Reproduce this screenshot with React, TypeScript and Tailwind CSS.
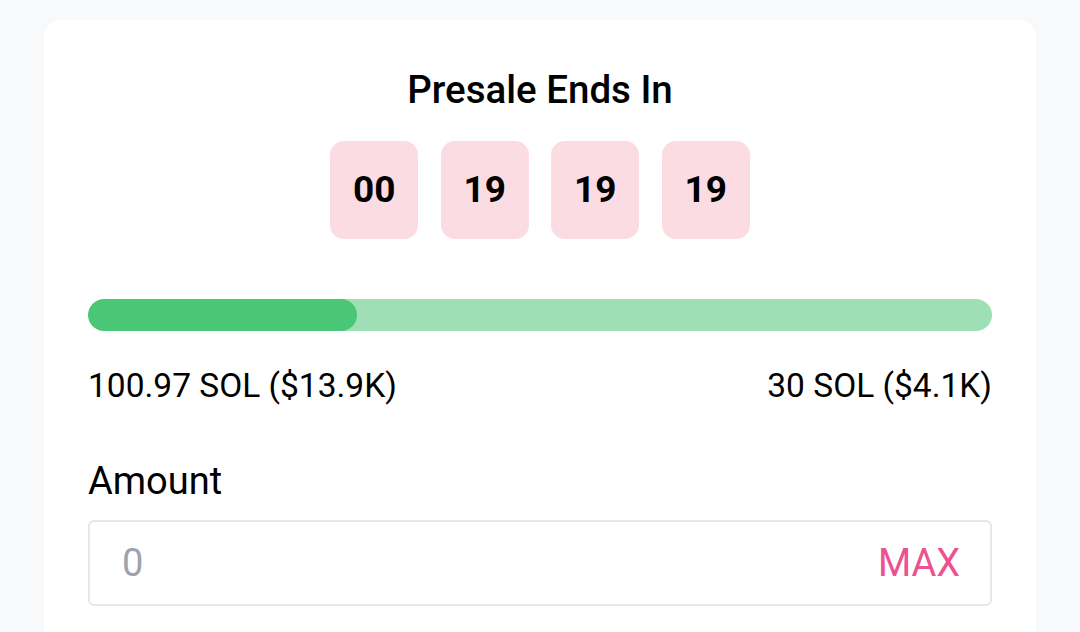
export default function App() {
  const units = ["00", "19", "19", "19"];
  const pct = (357 - 88) / (992 - 88) * 100;

  return (
    <div className="min-h-[632px] bg-[#f8f9fb] px-[44px] pt-[20px] font-['Roboto',sans-serif] text-black">
      <div className="rounded-t-[16px] bg-white px-[44px] pb-[30px] pt-[50px]">
        <h2 className="text-center text-[38.5px] font-medium leading-[40px]">Presale Ends In</h2>

        <div className="mt-[31px] flex justify-center gap-[22.5px]">
          {units.map((u, i) => (
            <div
              key={i}
              className="flex h-[98px] w-[88px] items-center justify-center rounded-[14px] bg-[#fcdce3] text-[37px] font-bold"
            >
              {u}
            </div>
          ))}
        </div>

        <div className="mt-[60px] h-[32px] w-full overflow-hidden rounded-full bg-[#9fdfb6]">
          <div className="h-full rounded-full bg-[#4ac776]" style={{ width: `${pct}%` }} />
        </div>

        <div className="mt-[37px] flex justify-between text-[33.5px] leading-[36px]">
          <span>100.97 SOL ($13.9K)</span>
          <span>30 SOL ($4.1K)</span>
        </div>

        <label className="mt-[57px] block text-[38px] leading-[40px]">Amount</label>
        <div className="mt-[19px] flex h-[86px] items-center justify-between rounded-[6px] border-2 border-[#e5e7eb] pl-[32px] pr-[30px]">
          <input
            placeholder="0"
            className="w-[200px] bg-transparent text-[38px] text-black outline-none placeholder:text-[#9ca3af]"
          />
          <button className="text-[38px] text-[#ec5290]">MAX</button>
        </div>
      </div>
    </div>
  );
}
